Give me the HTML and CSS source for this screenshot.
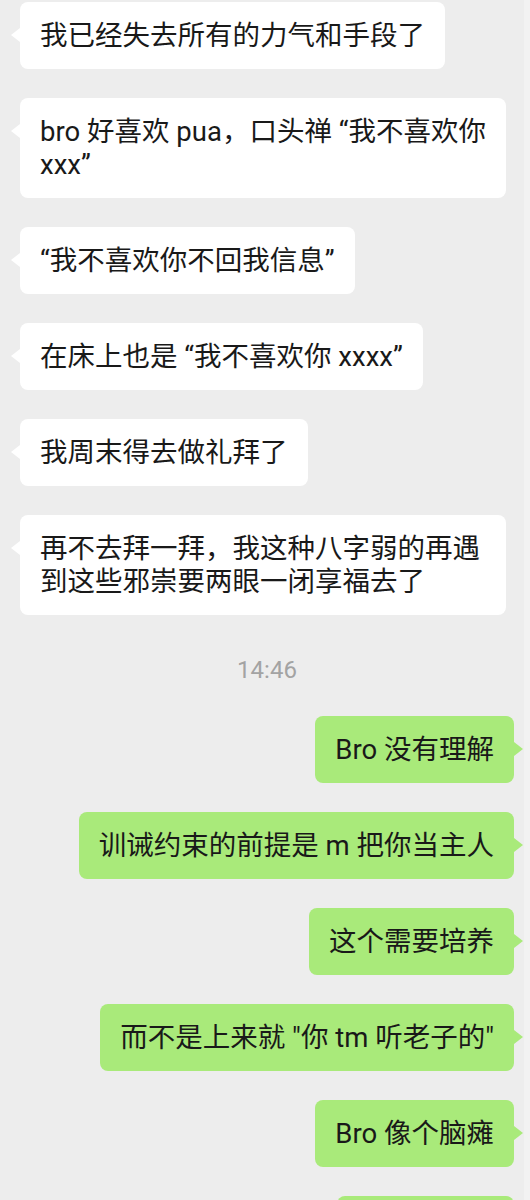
FILE: index.html
```html
<!DOCTYPE html>
<html lang="zh-CN">
<head>
    <meta charset="UTF-8">
    <meta name="viewport" content="width=device-width, initial-scale=1.0">
    <title>聊天</title>
    <link rel="stylesheet" href="styles.css">
</head>
<body>
    <div class="chat">
        <!-- their messages -->
        <div class="msg left">我已经失去所有的力气和手段了</div>
        <div class="msg left">bro 好喜欢 pua，口头禅 “我不喜欢你 xxx”</div>
        <div class="msg left">“我不喜欢你不回我信息”</div>
        <div class="msg left">在床上也是 “我不喜欢你 xxxx”</div>
        <div class="msg left">我周末得去做礼拜了</div>
        <div class="msg left">再不去拜一拜，我这种八字弱的再遇到这些邪崇要两眼一闭享福去了</div>

        <div class="time">14:46</div>

        <!-- my messages -->
        <div class="msg right">Bro 没有理解</div>
        <div class="msg right">训诫约束的前提是 m 把你当主人</div>
        <div class="msg right">这个需要培养</div>
        <div class="msg right">而不是上来就 "你 tm 听老子的"</div>
        <div class="msg right">Bro 像个脑瘫</div>
        <div class="msg right">好好说话吧</div>
    </div>
</body>
</html>
```

FILE: styles.css
```css
body {
    margin: 0;
    padding: 0;
    background: linear-gradient(to right, #ededed 524px, #f2f2f2 524px);
    font-family: Roboto, "Noto Sans CJK SC", sans-serif;
    color: #191919;
    overflow: hidden;
}
.chat {
    display: flex;
    flex-direction: column;
    gap: 29px;
    padding: 2px 16px 0 20px;
}
.msg {
    position: relative;
    max-width: 446px;
    padding: 17px 20px;
    font-size: 27.5px;
    line-height: 33px;
    border-radius: 8px;
}
.msg.left {
    align-self: flex-start;
    background-color: #fff;
}
.msg.right {
    align-self: flex-end;
    background-color: #a9ea7a;
}
/* bubble tails */
.msg::before {
    content: "";
    position: absolute;
    top: 26px;
    border-top: 7px solid transparent;
    border-bottom: 7px solid transparent;
}
.msg.left::before {
    left: -9px;
    border-right: 9px solid #fff;
}
.msg.right::before {
    right: -9px;
    border-left: 9px solid #a9ea7a;
}
.time {
    align-self: center;
    margin-top: 9px;
    font-size: 24px;
    line-height: 34px;
    color: #a3a3a3;
}
```
